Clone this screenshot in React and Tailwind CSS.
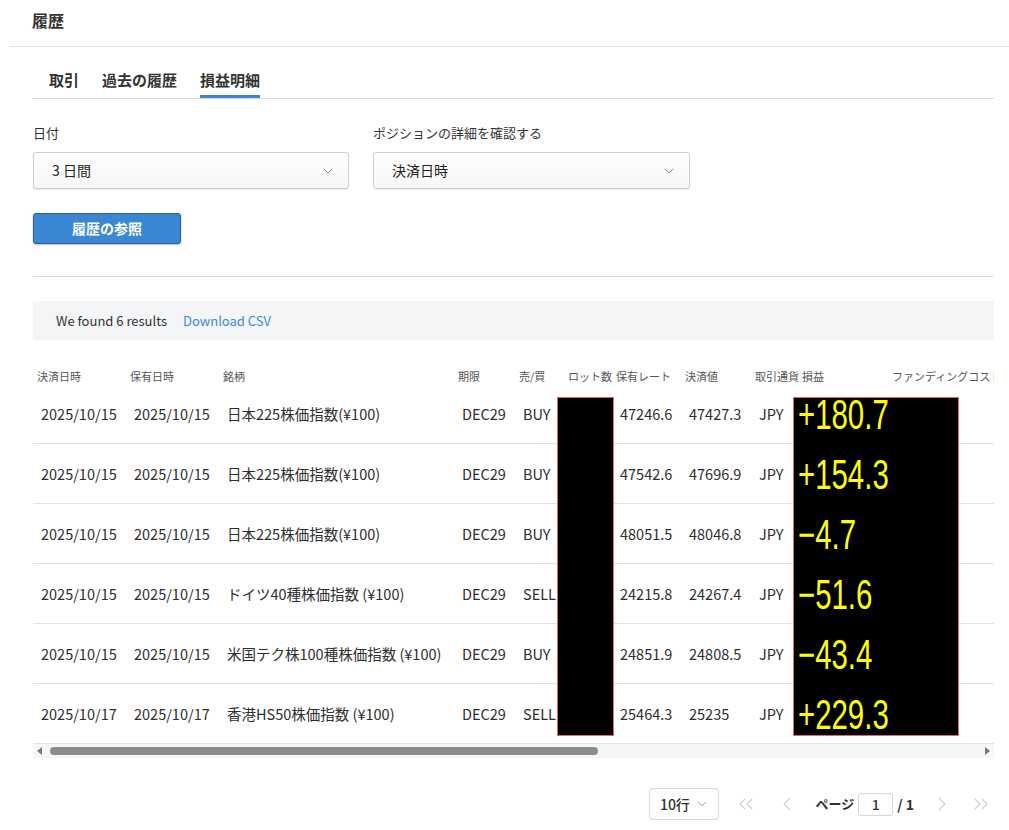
import { ChevronDown, ChevronLeft, ChevronRight, ChevronsLeft, ChevronsRight } from "lucide-react";

const COLS = [
  { key: "close", header: "決済日時", w: "w-[93px]" },
  { key: "open", header: "保有日時", w: "w-[93px]" },
  { key: "name", header: "銘柄", w: "w-[235px]" },
  { key: "exp", header: "期限", w: "w-[61px]" },
  { key: "side", header: "売/買", w: "w-[49px]" },
  { key: "lot", header: "ロット数", w: "w-[48px]" },
  { key: "rate", header: "保有レート", w: "w-[69px]" },
  { key: "price", header: "決済値", w: "w-[70px]" },
  { key: "ccy", header: "取引通貨", w: "w-[47px]" },
  { key: "pnl", header: "損益", w: "w-[90px]" },
  { key: "fund", header: "ファンディングコスト", w: "w-[140px]" },
];

const ROWS = [
  { close: "2025/10/15", open: "2025/10/15", name: "日本225株価指数(¥100)", exp: "DEC29", side: "BUY", rate: "47246.6", price: "47427.3", ccy: "JPY", pnl: "+180.7" },
  { close: "2025/10/15", open: "2025/10/15", name: "日本225株価指数(¥100)", exp: "DEC29", side: "BUY", rate: "47542.6", price: "47696.9", ccy: "JPY", pnl: "+154.3" },
  { close: "2025/10/15", open: "2025/10/15", name: "日本225株価指数(¥100)", exp: "DEC29", side: "BUY", rate: "48051.5", price: "48046.8", ccy: "JPY", pnl: "−4.7" },
  { close: "2025/10/15", open: "2025/10/15", name: "ドイツ40種株価指数 (¥100)", exp: "DEC29", side: "SELL", rate: "24215.8", price: "24267.4", ccy: "JPY", pnl: "−51.6" },
  { close: "2025/10/15", open: "2025/10/15", name: "米国テク株100種株価指数 (¥100)", exp: "DEC29", side: "BUY", rate: "24851.9", price: "24808.5", ccy: "JPY", pnl: "−43.4" },
  { close: "2025/10/17", open: "2025/10/17", name: "香港HS50株価指数 (¥100)", exp: "DEC29", side: "SELL", rate: "25464.3", price: "25235", ccy: "JPY", pnl: "+229.3" },
];

function Select({ label, value, className }) {
  return (
    <div className={className}>
      <p className="text-[13px] leading-[18px] text-[#333]">{label}</p>
      <div className="mt-[10px] flex h-[37px] items-center justify-between rounded-[3px] border border-[#cfcfcf] bg-gradient-to-b from-white to-[#f7f7f7] pl-[18px] pr-[12px] shadow-[0_1px_1px_rgba(0,0,0,0.08)]">
        <span className="text-[14px] text-[#222]">{value}</span>
        <ChevronDown size={16} strokeWidth={1.3} className="text-[#777]" />
      </div>
    </div>
  );
}

export default function App() {
  return (
    <div className="h-[830px] w-[1009px] overflow-hidden bg-white font-['Noto_Sans_CJK_JP','Noto_Sans',sans-serif] text-[#333]">
      <div className="pl-[10px]">
        <div className="flex h-[47px] items-start border-b border-[#e4e4e4] pl-[22px] pt-[8px] text-[16px] font-bold leading-[24px]">
          履歴
        </div>
      </div>

      <div className="pl-[33px] pr-[15px]">
        <div className="flex h-[52px] items-end gap-[23px] border-b border-[#dcdcdc] pl-[16px]">
          <span className="border-b-[3px] border-transparent pb-[5px] text-[15px] font-bold leading-[20px]">取引</span>
          <span className="border-b-[3px] border-transparent pb-[5px] text-[15px] font-bold leading-[20px]">過去の履歴</span>
          <span className="border-b-[3px] border-[#3a87d0] pb-[5px] text-[15px] font-bold leading-[20px]">損益明細</span>
        </div>

        <div className="mt-[25px] flex gap-[24px]">
          <Select label="日付" value="3 日間" className="w-[316px]" />
          <Select label="ポジションの詳細を確認する" value="決済日時" className="w-[317px]" />
        </div>

        <button className="mt-[24px] flex h-[31px] w-[148px] items-center justify-center rounded-[3px] border border-[#2c5f91] bg-[#3a88d3] text-[14px] font-bold text-white shadow-[0_1px_2px_rgba(0,0,0,0.25)]">
          履歴の参照
        </button>

        <div className="mt-[32px] border-t border-[#dedede]" />

        <div className="mt-[24px] flex h-[39px] items-center gap-[16px] bg-[#f4f5f7] pl-[23px] text-[13px]">
          <span className="text-[#333]">We found 6 results</span>
          <span className="text-[#3a8ad6]">Download CSV</span>
        </div>

        <div className="relative mt-[21px] overflow-hidden">
          <div className="flex h-[23px] items-end whitespace-nowrap text-[11px] leading-[16px] text-[#555]">
            {COLS.map((c) => (
              <div key={c.key} className={`${c.w} shrink-0 overflow-visible pl-[4px]`}>
                {c.header}
              </div>
            ))}
          </div>
          {ROWS.map((r, i) => (
            <div key={i} className="flex h-[60px] items-center whitespace-nowrap border-b border-[#e2e2e2] text-[14.5px] text-[#2e2e2e]">
              {COLS.map((c) => (
                <div key={c.key} className={`${c.w} shrink-0 pl-[8px]`}>
                  {c.key === "pnl" || c.key === "lot" ? "" : r[c.key]}
                </div>
              ))}
            </div>
          ))}

          <div className="flex h-[14px] items-center bg-[#f6f6f6] px-[4px]">
            <span className="h-0 w-0 border-y-[4px] border-r-[5px] border-y-transparent border-r-[#777]" />
            <span className="ml-[8px] h-[8px] w-[548px] rounded-full bg-[#8c8c8c]" />
            <span className="ml-auto h-0 w-0 border-y-[4px] border-l-[5px] border-y-transparent border-l-[#777]" />
          </div>

          <div className="absolute left-[524px] top-[36px] h-[339px] w-[57px] border border-[#d96a6a] bg-black" />
          <div className="absolute left-[760px] top-[36px] flex h-[339px] w-[166px] flex-col border border-[#d96a6a] bg-black pl-[4px]">
            {ROWS.map((r, i) => (
              <div key={i} className="h-[60px] shrink-0">
                <span className="inline-block origin-left scale-x-[0.7] font-['Liberation_Sans',sans-serif] text-[42px] leading-[34px] text-[#ffff00]">
                  {r.pnl}
                </span>
              </div>
            ))}
          </div>
        </div>

        <div className="mt-[30px] flex items-center justify-end pr-[1px] text-[14px] font-medium text-[#333]">
          <div className="flex h-[32px] w-[70px] items-center justify-center gap-[5px] rounded-[4px] border border-[#dcdcdc]">
            <span>10行</span>
            <ChevronDown size={14} strokeWidth={1.4} className="text-[#888]" />
          </div>
          <ChevronsLeft size={24} strokeWidth={1.1} className="ml-[15px] text-[#cfcfcf]" />
          <ChevronLeft size={24} strokeWidth={1.1} className="ml-[17px] text-[#cfcfcf]" />
          <span className="ml-[16px] text-[13px] font-bold">ページ</span>
          <div className="ml-[4px] flex h-[23px] w-[35px] items-center justify-center rounded-[3px] border border-[#d6d6d6]">1</div>
          <span className="ml-[4px] font-bold">/ 1</span>
          <ChevronRight size={24} strokeWidth={1.1} className="ml-[16px] text-[#cfcfcf]" />
          <ChevronsRight size={24} strokeWidth={1.1} className="ml-[15px] text-[#cfcfcf]" />
        </div>
      </div>
    </div>
  );
}
